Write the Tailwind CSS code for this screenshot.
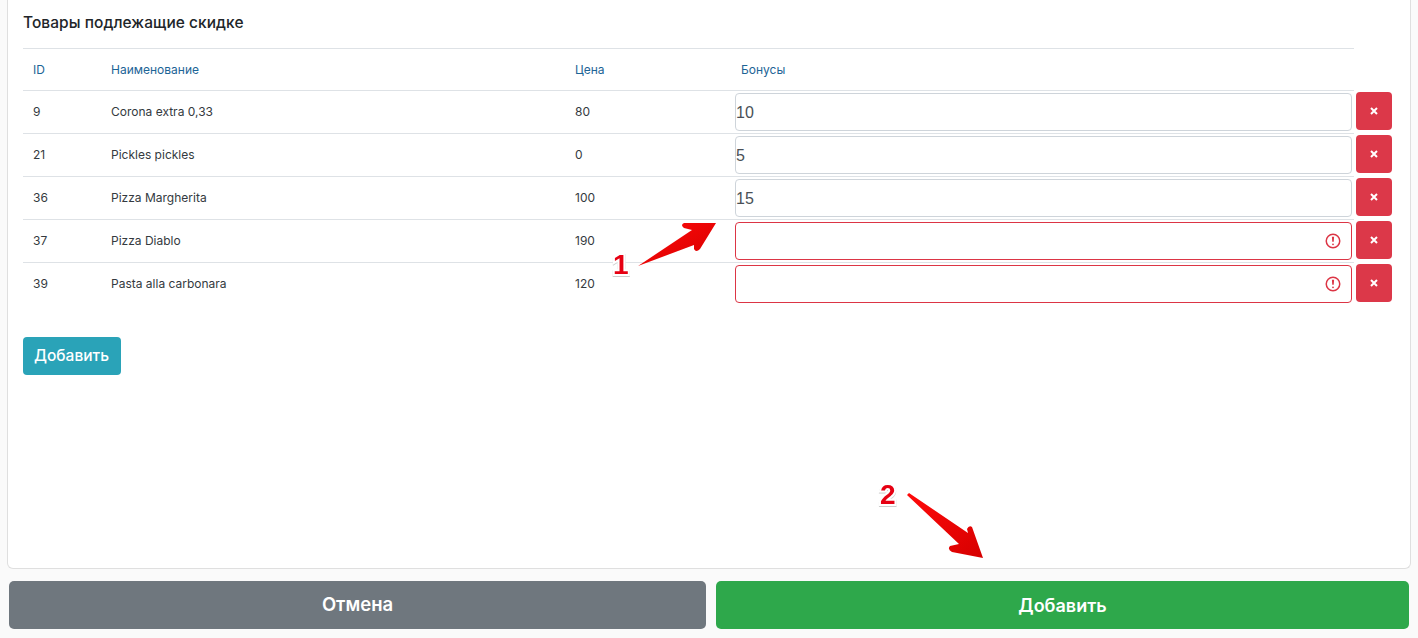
<!DOCTYPE html>
<html lang="ru">
<head>
    <meta charset="UTF-8">
    <title>Товары подлежащие скидке</title>
    <script src="https://cdn.jsdelivr.net/npm/@tailwindcss/browser@4"></script>
</head>
<body class="relative h-[638px] w-[1418px] overflow-hidden bg-[#fafafa] font-['Inter',sans-serif] text-[#343a40]">
    <!-- карточка -->
    <div class="mx-[7px] h-[569px] rounded-b-[6px] border-x border-b border-[#dfdfdf] bg-white pl-[15px]">
        <h2 class="flex h-[48px] items-center pb-[2px] text-[15.5px] font-medium tracking-[0.05px] text-[#212529]">Товары подлежащие скидке</h2>

        <div class="w-[1331px] text-[12px]">
            <!-- шапка -->
            <div class="flex h-[42px] items-center border-t border-[#dee2e6] text-[#1d6496]">
                <div class="w-[78px] shrink-0 pl-[10px]">ID</div>
                <div class="w-[464px] shrink-0 pl-[10px]">Наименование</div>
                <div class="w-[166px] shrink-0 pl-[10px]">Цена</div>
                <div class="pl-[10px]">Бонусы</div>
            </div>

            <div class="flex h-[43px] items-center border-t border-[#dee2e6]">
                <div class="w-[78px] shrink-0 pl-[10px]">9</div>
                <div class="w-[464px] shrink-0 pl-[10px]">Corona extra 0,33</div>
                <div class="w-[166px] shrink-0 pl-[10px]">80</div>
                <div class="flex items-center pl-[4px]">
                    <input value="10" class="h-[38px] w-[617px] shrink-0 rounded-[4px] border border-[#ced4da] pt-[2px] font-['Liberation_Sans',sans-serif] text-[16px] text-[#495057]">
                    <button class="mb-[2px] ml-[4px] flex h-[38px] w-[36px] shrink-0 items-center justify-center rounded-[4px] bg-[#dc3849]">
                        <svg width="8" height="8" viewBox="0 0 8 8"><path d="M1 1l6 6M7 1l-6 6" stroke="#fff" stroke-width="2"/></svg>
                    </button>
                </div>
            </div>

            <div class="flex h-[43px] items-center border-t border-[#dee2e6]">
                <div class="w-[78px] shrink-0 pl-[10px]">21</div>
                <div class="w-[464px] shrink-0 pl-[10px]">Pickles pickles</div>
                <div class="w-[166px] shrink-0 pl-[10px]">0</div>
                <div class="flex items-center pl-[4px]">
                    <input value="5" class="h-[38px] w-[617px] shrink-0 rounded-[4px] border border-[#ced4da] pt-[2px] font-['Liberation_Sans',sans-serif] text-[16px] text-[#495057]">
                    <button class="mb-[2px] ml-[4px] flex h-[38px] w-[36px] shrink-0 items-center justify-center rounded-[4px] bg-[#dc3849]">
                        <svg width="8" height="8" viewBox="0 0 8 8"><path d="M1 1l6 6M7 1l-6 6" stroke="#fff" stroke-width="2"/></svg>
                    </button>
                </div>
            </div>

            <div class="flex h-[43px] items-center border-t border-[#dee2e6]">
                <div class="w-[78px] shrink-0 pl-[10px]">36</div>
                <div class="w-[464px] shrink-0 pl-[10px]">Pizza Margherita</div>
                <div class="w-[166px] shrink-0 pl-[10px]">100</div>
                <div class="flex items-center pl-[4px]">
                    <input value="15" class="h-[38px] w-[617px] shrink-0 rounded-[4px] border border-[#ced4da] pt-[2px] font-['Liberation_Sans',sans-serif] text-[16px] text-[#495057]">
                    <button class="mb-[2px] ml-[4px] flex h-[38px] w-[36px] shrink-0 items-center justify-center rounded-[4px] bg-[#dc3849]">
                        <svg width="8" height="8" viewBox="0 0 8 8"><path d="M1 1l6 6M7 1l-6 6" stroke="#fff" stroke-width="2"/></svg>
                    </button>
                </div>
            </div>

            <div class="flex h-[43px] items-center border-t border-[#dee2e6]">
                <div class="w-[78px] shrink-0 pl-[10px]">37</div>
                <div class="w-[464px] shrink-0 pl-[10px]">Pizza Diablo</div>
                <div class="w-[166px] shrink-0 pl-[10px]">190</div>
                <div class="flex items-center pl-[4px]">
                    <div class="relative shrink-0">
                        <input class="block h-[38px] w-[617px] rounded-[4px] border border-[#dc3545]">
                        <svg class="absolute right-[10px] top-[10px]" width="18" height="18" viewBox="0 0 12 12" fill="none" stroke="#dc3545"><circle cx="6" cy="6" r="4.5"/><path d="M5.8 3.6h.4L6 6.5z"/><circle cx="6" cy="8.2" r=".6" fill="#dc3545" stroke="none"/></svg>
                    </div>
                    <button class="mb-[2px] ml-[4px] flex h-[38px] w-[36px] shrink-0 items-center justify-center rounded-[4px] bg-[#dc3849]">
                        <svg width="8" height="8" viewBox="0 0 8 8"><path d="M1 1l6 6M7 1l-6 6" stroke="#fff" stroke-width="2"/></svg>
                    </button>
                </div>
            </div>

            <div class="flex h-[43px] items-center border-t border-[#dee2e6]">
                <div class="w-[78px] shrink-0 pl-[10px]">39</div>
                <div class="w-[464px] shrink-0 pl-[10px]">Pasta alla carbonara</div>
                <div class="w-[166px] shrink-0 pl-[10px]">120</div>
                <div class="flex items-center pl-[4px]">
                    <div class="relative shrink-0">
                        <input class="block h-[38px] w-[617px] rounded-[4px] border border-[#dc3545]">
                        <svg class="absolute right-[10px] top-[10px]" width="18" height="18" viewBox="0 0 12 12" fill="none" stroke="#dc3545"><circle cx="6" cy="6" r="4.5"/><path d="M5.8 3.6h.4L6 6.5z"/><circle cx="6" cy="8.2" r=".6" fill="#dc3545" stroke="none"/></svg>
                    </div>
                    <button class="mb-[2px] ml-[4px] flex h-[38px] w-[36px] shrink-0 items-center justify-center rounded-[4px] bg-[#dc3849]">
                        <svg width="8" height="8" viewBox="0 0 8 8"><path d="M1 1l6 6M7 1l-6 6" stroke="#fff" stroke-width="2"/></svg>
                    </button>
                </div>
            </div>
        </div>

        <button class="mt-[32px] h-[38px] w-[98px] rounded-[4px] bg-[#2aa3b8] pr-[1px] text-[15.5px] font-medium text-white">Добавить</button>
    </div>

    <!-- нижние кнопки -->
    <div class="flex gap-[10px] pl-[9px] pt-[12px]">
        <button class="h-[48px] w-[697px] rounded-[5px] bg-[#6f777e] text-[18.5px] font-semibold text-white">Отмена</button>
        <button class="h-[48px] w-[693px] rounded-[5px] bg-[#2ea84b] text-[18px] font-semibold text-white">Добавить</button>
    </div>

    <!-- пометки на скриншоте -->
    <svg class="pointer-events-none absolute left-0 top-0" width="1418" height="638" viewBox="0 0 1418 638">
        <defs>
            <linearGradient id="arrowRed" x1="0" y1="0" x2="1" y2="1">
                <stop offset="0" stop-color="#ff0a0a"/>
                <stop offset="1" stop-color="#d60000"/>
            </linearGradient>
        </defs>
        <path d="M638 266L692 230L684 228Q680 225 684 223L716 223L700 249Q696 253 694 249L694 245Z" fill="url(#arrowRed)"/>
        <path d="M907 495L909 493L968 533L967 529Q969 525 972 527L983 558L952 552Q947 549 950 546L959 544Z" fill="url(#arrowRed)"/>
    </svg>
    <div class="absolute left-[613px] top-[248px] font-['Liberation_Sans',sans-serif] text-[28px] leading-[34px] font-bold text-[#e60012] [-webkit-text-stroke:4px_white] [paint-order:stroke_fill] drop-shadow-[0_1px_0_#ccc]">1</div>
    <div class="absolute left-[880px] top-[478px] font-['Liberation_Sans',sans-serif] text-[28px] leading-[34px] font-bold text-[#e60012] [-webkit-text-stroke:4px_white] [paint-order:stroke_fill] drop-shadow-[0_1px_0_#ccc]">2</div>
</body>
</html>
